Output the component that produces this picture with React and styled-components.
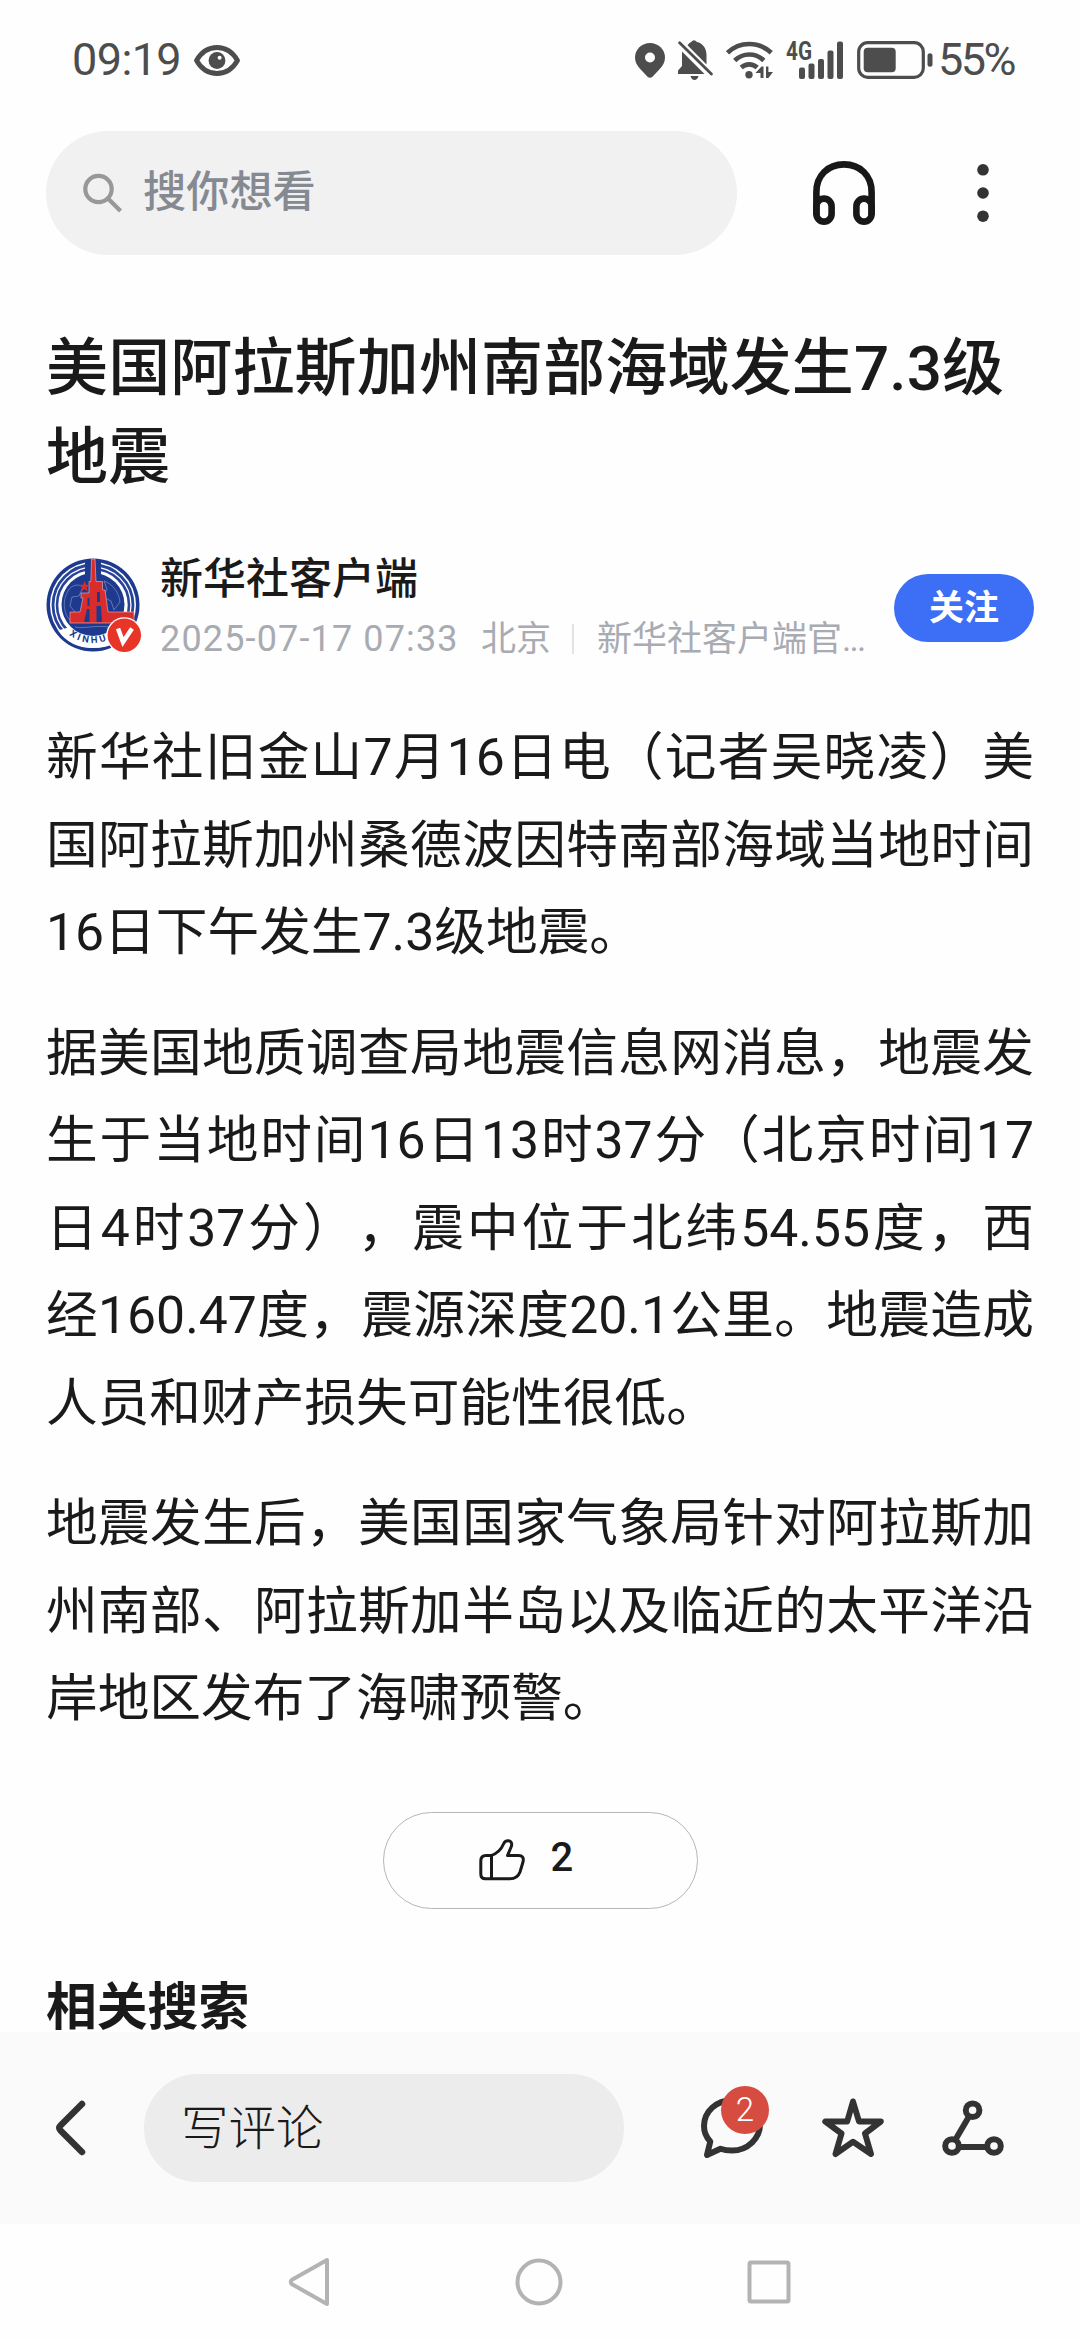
import React from 'react'
import styled, { createGlobalStyle } from 'styled-components';

const GlobalStyle = createGlobalStyle`
    * {
        box-sizing: border-box;
    }
    body {
        margin: 0;
        background-color: #fefefe;
    }
    p, h1, h2 {
        margin: 0;
    }
    svg {
        display: block;
        flex: none;
    }
`;

const Container = styled.div`
    width: 1080px;
    height: 2340px;
    display: flex;
    flex-direction: column;
    overflow: hidden;
    background-color: #fefefe;
    color: #1a1a1a;
    font-family: Roboto, "Noto Sans CJK SC", sans-serif;
    line-height: 1.2;
    text-spacing-trim: space-all;
    white-space: nowrap;
`;

/* status bar */

const StatusBar = styled.div`
    height: 131px;
    padding: 0 65px 11px 72px;
    display: flex;
    align-items: center;
    justify-content: space-between;
    color: #4d4d4d;
    font-size: 45px;
`;

const StatusGroup = styled.div`
    display: flex;
    align-items: center;
`;

const StatusIcons = styled(StatusGroup)`
    gap: 13px;
`;

const Clock = styled.span`
    width: 110px;
    margin-right: 12px;
    letter-spacing: -0.6px;
`;

const Percent = styled.span`
    width: 77px;
    margin-left: 5px;
    letter-spacing: -2.6px;
`;

/* search */

const SearchRow = styled.div`
    height: 124px;
    padding: 0 91px 0 46px;
    display: flex;
    align-items: center;
`;

const SearchBox = styled.div`
    width: 691px;
    height: 124px;
    padding: 0 36px;
    display: flex;
    align-items: center;
    gap: 21px;
    border-radius: 62px;
    background-color: #f1f1f1;
    color: #858992;
    font-size: 43.2px;
    font-weight: 500;
`;

const SearchActions = styled.div`
    flex: 1;
    padding-left: 76px;
    display: flex;
    align-items: center;
    justify-content: space-between;
`;

/* article */

const Article = styled.div`
    flex: 1;
    min-height: 0;
    overflow: hidden;
    padding: 69px 46px 0;
`;

const Title = styled.h1`
    font-size: 62px;
    line-height: 89px;
    font-weight: 500;
    letter-spacing: 0.15px;
`;

const AuthorRow = styled.div`
    height: 100px;
    margin-top: 53px;
    display: flex;
    align-items: center;
`;

const AuthorInfo = styled.div`
    flex: 1;
    margin: 8px 0 0 18px;
`;

const AuthorName = styled.p`
    font-size: 43px;
    line-height: 60px;
    font-weight: 500;
`;

const Meta = styled.div`
    display: flex;
    align-items: baseline;
    height: 60px;
    line-height: 60px;
    color: #a9abb2;
    font-size: 35px;
`;

const MetaDate = styled.span`
    width: 321px;
    font-size: 36px;
    letter-spacing: 1.15px;
`;

const MetaDivider = styled.span`
    width: 2px;
    height: 30px;
    margin: 0 23px 0 21px;
    align-self: center;
    background-color: #e2e3e6;
`;

const Dots = styled.span`
    letter-spacing: -1.8px;
`;

const FollowButton = styled.button`
    width: 140px;
    height: 68px;
    margin-top: 6px;
    padding: 2px 0 0;
    border: none;
    border-radius: 34px;
    background-color: #3c6ef6;
    color: white;
    font-family: inherit;
    font-size: 35px;
    font-weight: 700;
    line-height: 1.2;
`;

const Body = styled.div`
    margin-top: 59px;
    display: flex;
    flex-direction: column;
    gap: 33px;
`;

const Line = styled.p`
    font-size: 51.7px;
    line-height: 87.5px;
    text-align: justify;
    text-align-last: ${(props) => (props.$last ? 'left' : 'justify')};
    text-justify: inter-character;
`;

const LikeRow = styled.div`
    margin-top: 69px;
    display: flex;
    justify-content: center;
`;

const LikeButton = styled.div`
    width: 315px;
    height: 97px;
    padding-left: 95px;
    display: flex;
    align-items: center;
    gap: 26px;
    border: 1px solid #b4b6b9;
    border-radius: 49px;
`;

const LikeCount = styled.span`
    padding-bottom: 4px;
    font-size: 40px;
    font-weight: 500;
`;

const Related = styled.h2`
    margin-top: 75px;
    font-size: 50.8px;
    line-height: 48px;
    font-weight: 700;
`;

/* bottom */

const CommentBar = styled.div`
    height: 192px;
    padding: 0 76px 0 55px;
    display: flex;
    align-items: center;
    background-color: #fafafa;
`;

const CommentInput = styled.div`
    width: 480px;
    height: 108px;
    margin-left: 58px;
    padding: 2px 0 0 37px;
    display: flex;
    align-items: center;
    border-radius: 54px;
    background-color: #ececec;
    font-size: 47.5px;
    font-weight: 300;
`;

const CommentActions = styled.div`
    flex: 1;
    margin-left: 77px;
    display: flex;
    align-items: center;
    justify-content: space-between;
`;

const IconWrap = styled.div`
    position: relative;
`;

const Badge = styled.span`
    position: absolute;
    top: -11px;
    left: 20px;
    width: 48px;
    height: 48px;
    border-radius: 50%;
    background-color: #d74c41;
    color: white;
    font-size: 33px;
    font-weight: 300;
    line-height: 47px;
    text-align: center;
`;

const NavBar = styled.div`
    height: 116px;
    padding: 0 289px 0 288px;
    display: flex;
    align-items: center;
    justify-content: space-between;
`;

const paragraphs = [
    [
        '新华社旧金山7月16日电（记者吴晓凌）美',
        '国阿拉斯加州桑德波因特南部海域当地时间',
        '16日下午发生7.3级地震。',
    ],
    [
        '据美国地质调查局地震信息网消息，地震发',
        '生于当地时间16日13时37分（北京时间17',
        '日4时37分），震中位于北纬54.55度，西',
        '经160.47度，震源深度20.1公里。地震造成',
        '人员和财产损失可能性很低。',
    ],
    [
        '地震发生后，美国国家气象局针对阿拉斯加',
        '州南部、阿拉斯加半岛以及临近的太平洋沿',
        '岸地区发布了海啸预警。',
    ],
];

const EyeIcon = () => (
    <svg width="46" height="31" viewBox="0 0 46 31" fill="none">
        <path d="M2.500 15.500C7.500 6.800 14.500 2.500 23 2.500S38.500 6.800 43.500 15.500C38.500 24.200 31.500 28.500 23 28.500S7.500 24.200 2.500 15.500Z" stroke="#4d4d4d" strokeWidth="4.800" strokeLinejoin="round" />
        <circle cx="23" cy="15.500" r="8.400" fill="#4d4d4d" />
        <circle cx="25.600" cy="12.700" r="2" fill="#fefefe" />
    </svg>
)

const PinIcon = () => (
    <svg width="30" height="35" viewBox="0 0 30 35">
        <path d="M15 0C6.700 0 0 6.500 0 14.500c0 4.500 2 8 5.500 11.800l7 7.400c1.500 1.500 3.500 1.500 5 0l7-7.400C28 22.500 30 19 30 14.500 30 6.500 23.300 0 15 0Z" fill="#4d4d4d" />
        <circle cx="15" cy="14.500" r="5" fill="#fefefe" />
    </svg>
)

const BellOffIcon = () => (
    <svg width="35" height="40" viewBox="0 0 35 40" fill="#4d4d4d">
        <path d="M13.500 1.800a2.800 2.800 0 0 1 5 0C25 3.500 28.500 8.500 28.500 15v9.500L9.500 5.200Q11.500 2.500 13.500 1.800Z" />
        <path d="M4 26V11.500L26.500 34H0v-3.500Z" />
        <path d="M12.500 36h8c-.6 2.400-2.200 4-4 4s-3.400-1.600-4-4Z" />
        <path d="M1.600 2.800 33.400 34" stroke="#4d4d4d" strokeWidth="2.800" strokeLinecap="round" />
    </svg>
)

const WifiIcon = () => (
    <svg width="47" height="38" viewBox="0 0 47 38" fill="none">
        <g stroke="#4d4d4d" strokeWidth="4.700">
            <path d="M1.500 11.800C7.500 6 15 3 23.200 3s16 3 22 8.800" />
            <path d="M8.700 19.500C13 15.500 17.800 13.500 23.200 13.500S33.500 15.500 37.800 19.500" />
            <path d="M15.200 26.500c2.400-2.200 5-3.200 8-3.200s5.600 1 8 3.200" />
        </g>
        <circle cx="23" cy="33.700" r="3.700" fill="#4d4d4d" />
        <path d="M37.500 25.500V37h-3v-5h-5l6-6.500ZM40 25.500h2.400V31H47l-4.600 6H40Z" fill="#4d4d4d" />
    </svg>
)

const SignalIcon = () => (
    <svg width="58" height="52" viewBox="0 -7 58 52" fill="#4d4d4d">
        <text x="0" y="18.500" fontSize="25" fontWeight="700" fontFamily="Roboto, sans-serif" textLength="26" lengthAdjust="spacingAndGlyphs">4G</text>
        <rect x="13" y="26.500" width="6" height="11.500" rx="2" />
        <rect x="22.500" y="22.500" width="6" height="15.500" rx="2" />
        <rect x="32" y="18" width="6" height="20" rx="2" />
        <rect x="41.500" y="9.500" width="6" height="28.500" rx="2" />
        <rect x="51" y="0.500" width="6" height="37.500" rx="2" />
    </svg>
)

const BatteryIcon = () => (
    <svg width="76" height="38" viewBox="0 0 76 38">
        <rect x="1.700" y="1.700" width="64.600" height="34.600" rx="9" fill="none" stroke="#4d4d4d" strokeWidth="3.200" />
        <rect x="6.700" y="6.700" width="32" height="24.600" rx="4" fill="#4d4d4d" />
        <rect x="70.500" y="12.300" width="5" height="13.400" rx="2.500" fill="#4d4d4d" />
    </svg>
)

const SearchIcon = () => (
    <svg width="40" height="40" viewBox="0 0 40 40" fill="none" stroke="#989898" strokeWidth="4.200">
        <circle cx="16.500" cy="16" r="13.200" />
        <path d="M26 25.500 38.500 38" />
    </svg>
)

const HeadphoneIcon = () => (
    <svg width="62" height="64" viewBox="0 0 62 64" fill="none" stroke="#181818" strokeWidth="6.600">
        <path d="M3.400 54V31C3.400 14.500 15 3.400 31 3.400S58.600 14.500 58.600 31v23" />
        <rect x="3.400" y="37.600" width="15.200" height="23" rx="7.600" />
        <rect x="43.400" y="37.600" width="15.200" height="23" rx="7.600" />
    </svg>
)

const MoreIcon = () => (
    <svg width="12" height="58" viewBox="0 0 12 58" fill="#333">
        <circle cx="6" cy="5.800" r="5.800" />
        <circle cx="6" cy="29" r="5.800" />
        <circle cx="6" cy="52.200" r="5.800" />
    </svg>
)

const Avatar = () => (
    <svg width="96" height="96" viewBox="0 0 96 96">
        <defs>
            <path id="ring" d="M22.400 77.300A38.200 38.200 0 0 0 84 56" />
        </defs>
        <circle cx="47" cy="48" r="46.500" fill="#1d3a8f" />
        <circle cx="47" cy="48" r="43" fill="white" />
        <circle cx="47" cy="48" r="40" fill="none" stroke="#27449a" strokeWidth="2.800" />
        <circle cx="47" cy="48" r="36" fill="none" stroke="#27449a" strokeWidth="2.600" />
        <circle cx="47" cy="47.500" r="31.500" fill="#1d3a8f" />
        <path d="M39 4h16v14H39Z" fill="#1d3a8f" />
        <path d="M12 73.500 24 70Q34 79.500 47 79.500T72 70L84 70Q74 91 47 91 24 91 12 73.500Z" fill="white" />
        <g fill="none" stroke="#7385ba" strokeWidth="0.800">
            <path d="M22 34c4-7 11-7 15-4l-4 9-7 1-2 9 5 6-4 9c-6-5-10-18-3-30Z" />
            <path d="M58 24c9 3 15 12 16 21l-6 8-3-9-8-4 4-8Z" />
            <path d="M29 70c8 2 20-2 34 0" />
        </g>
        <g fill="#d92d2b" stroke="#dfa3b0" strokeWidth="0.700">
            <path d="M45.600 2h3.400l1 22.500h6.500V33h2.500l3 22h26v11H24V55h10l3-14h-2v-5h8V24.500h1.800Z" />
            <path d="m38.500 24 1.400 3.800h4l-3.200 2.600 1.200 4-3.400-2.400-3.400 2.400 1.200-4-3.200-2.600h4Z" stroke="none" />
        </g>
        <path d="M41.500 41h2v8h-2ZM41 52h2.500v13H38ZM51 35h3v10h-3ZM50.500 49h4.500l1 16h-5.500Z" fill="#1d3a8f" />
        <text fontSize="9.500" fontWeight="700" fontFamily="Roboto, sans-serif" fill="#1d3a8f" letterSpacing="2.700">
            <textPath href="#ring" startOffset="1">XINHUA</textPath>
        </text>
        <circle cx="78.300" cy="78.200" r="18" fill="white" />
        <circle cx="78.300" cy="78.200" r="16.700" fill="#e73527" />
        <path d="m72 71.500 5 13.500L86 71.500" fill="none" stroke="white" strokeWidth="4.500" />
    </svg>
)

const LikeIcon = () => (
    <svg width="46" height="42" viewBox="0 0 46 42" fill="none" stroke="#1a1a1a" strokeWidth="3" strokeLinejoin="round">
        <path d="M12 16.600H7Q1.800 16.600 1.800 22v13Q1.800 39.800 6.500 39.800H31Q38.500 39.800 41 33L44 23Q45.500 16.600 39.500 16.600H28.500L32.500 7Q33.500 2.500 29.500 1.800 26 1.500 24.500 5 21 13.500 12 16.600Z" />
        <path d="M12.500 16.600v23" />
    </svg>
)

const BackIcon = () => (
    <svg width="31" height="56" viewBox="0 0 31 56" fill="none" stroke="#333" strokeWidth="6.500" strokeLinecap="round" strokeLinejoin="round">
        <path d="M27 4 5.500 25.500Q3 28 5.500 30.500L27 52" />
    </svg>
)

const CommentIcon = () => (
    <svg width="62" height="62" viewBox="0 0 62 62" fill="none" stroke="#333" strokeWidth="6" strokeLinecap="round" strokeLinejoin="round">
        <path d="M6 58 9.300 44.500C5 40 3 34.500 3 29 3 14.500 15.500 3.200 31 3.200S59 14 59 27.500 47 53.500 31 53.500c-4.500 0-8-.5-11.500-1.800Z" />
    </svg>
)

const StarIcon = () => (
    <svg width="62" height="60" viewBox="0 0 62 60" fill="none" stroke="#333" strokeWidth="6" strokeLinejoin="round">
        <path d="M31 3.500 37 23.500H58.800L43 35.500 49 56 31 43.800 13.500 56 19.500 35.500 3.300 23.500H25.200Z" />
    </svg>
)

const ShareIcon = () => (
    <svg width="62" height="56" viewBox="0 0 62 56" fill="none" stroke="#333" strokeWidth="6">
        <circle cx="30.600" cy="10.300" r="6.800" />
        <circle cx="10" cy="46" r="6.800" />
        <circle cx="52" cy="46" r="6.800" />
        <path d="M27 16.500 13.500 39.500M17 47h28" />
    </svg>
)

const NavBack = () => (
    <svg width="42" height="50" viewBox="0 0 42 50" fill="none" stroke="#b3b3b3" strokeWidth="4" strokeLinejoin="round">
        <path d="M39 3v44L4 27.200Q1.500 25 4 22.800Z" />
    </svg>
)

const NavHome = () => (
    <svg width="48" height="48" viewBox="0 0 48 48" fill="none" stroke="#b3b3b3" strokeWidth="4">
        <circle cx="24" cy="24" r="21.500" />
    </svg>
)

const NavRecent = () => (
    <svg width="44" height="44" viewBox="0 0 44 44" fill="none" stroke="#b3b3b3" strokeWidth="4">
        <rect x="2.500" y="2.500" width="39" height="39" rx="1.500" />
    </svg>
)

const App = () => {
    return (
        <Container>
            <GlobalStyle />
            <StatusBar>
                <StatusGroup>
                    <Clock>09:19</Clock>
                    <EyeIcon />
                </StatusGroup>
                <StatusGroup>
                    <StatusIcons>
                        <PinIcon />
                        <BellOffIcon />
                        <WifiIcon />
                        <SignalIcon />
                        <BatteryIcon />
                    </StatusIcons>
                    <Percent>55%</Percent>
                </StatusGroup>
            </StatusBar>

            <SearchRow>
                <SearchBox>
                    <SearchIcon />
                    搜你想看
                </SearchBox>
                <SearchActions>
                    <HeadphoneIcon />
                    <MoreIcon />
                </SearchActions>
            </SearchRow>

            <Article>
                <Title>美国阿拉斯加州南部海域发生7.3级<br />地震</Title>
                <AuthorRow>
                    <Avatar />
                    <AuthorInfo>
                        <AuthorName>新华社客户端</AuthorName>
                        <Meta>
                            <MetaDate>2025-07-17 07:33</MetaDate>
                            北京
                            <MetaDivider />
                            新华社客户端官
                            <Dots>...</Dots>
                        </Meta>
                    </AuthorInfo>
                    <FollowButton>关注</FollowButton>
                </AuthorRow>
                <Body>
                    {paragraphs.map((lines) => (
                        <div key={lines[0]}>
                            {lines.map((line, i) => (
                                <Line key={line} $last={i === lines.length - 1}>{line}</Line>
                            ))}
                        </div>
                    ))}
                </Body>
                <LikeRow>
                    <LikeButton>
                        <LikeIcon />
                        <LikeCount>2</LikeCount>
                    </LikeButton>
                </LikeRow>
                <Related>相关搜索</Related>
            </Article>

            <CommentBar>
                <BackIcon />
                <CommentInput>写评论</CommentInput>
                <CommentActions>
                    <IconWrap>
                        <CommentIcon />
                        <Badge>2</Badge>
                    </IconWrap>
                    <StarIcon />
                    <ShareIcon />
                </CommentActions>
            </CommentBar>

            <NavBar>
                <NavBack />
                <NavHome />
                <NavRecent />
            </NavBar>
        </Container>
    )
}

export default App
